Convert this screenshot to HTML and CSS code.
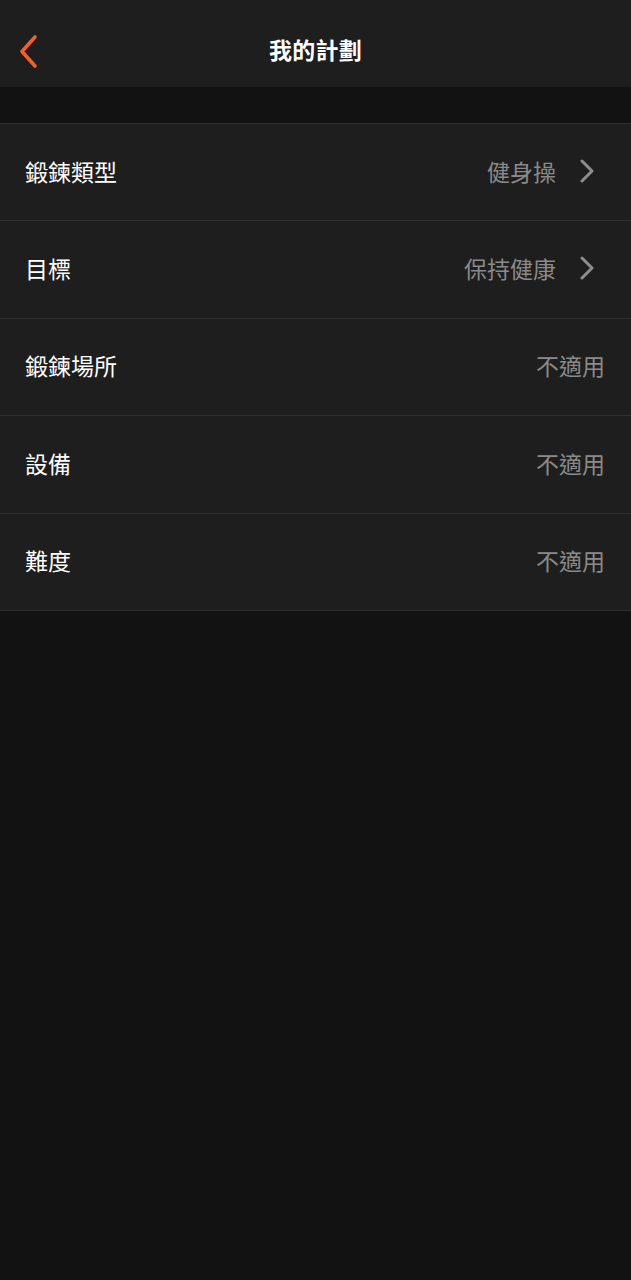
FILE: index.html
```html
<!DOCTYPE html>
<html lang="zh-Hant">
<head>
<meta charset="utf-8">
<title>我的計劃</title>
<link rel="stylesheet" href="styles.css">
</head>
<body>
<div class="app">
  <header class="topbar">
    <button class="back" aria-label="返回">
      <svg width="24" height="36" viewBox="0 0 24 36"><path d="M17 3 L4 17.5 L17 32" fill="none" stroke="#f2602d" stroke-width="3.6" stroke-linecap="round" stroke-linejoin="round"/></svg>
    </button>
    <h1 class="title">我的計劃</h1>
  </header>
  <div class="spacer"></div>
  <ul class="list">
    <li class="row"><span class="label">鍛鍊類型</span><span class="value">健身操</span><svg class="chev" width="16" height="24" viewBox="0 0 16 24"><path d="M3 2 L13 12 L3 22" fill="none" stroke="#8d8d8d" stroke-width="3" stroke-linecap="round" stroke-linejoin="round"/></svg></li>
    <li class="row"><span class="label">目標</span><span class="value">保持健康</span><svg class="chev" width="16" height="24" viewBox="0 0 16 24"><path d="M3 2 L13 12 L3 22" fill="none" stroke="#8d8d8d" stroke-width="3" stroke-linecap="round" stroke-linejoin="round"/></svg></li>
    <li class="row"><span class="label">鍛鍊場所</span><span class="value">不適用</span></li>
    <li class="row"><span class="label">設備</span><span class="value">不適用</span></li>
    <li class="row"><span class="label">難度</span><span class="value">不適用</span></li>
  </ul>
</div>
</body>
</html>
```

FILE: styles.css
```css
* { box-sizing: border-box; }
html, body {
  margin: 0;
  padding: 0;
  background: #121212;
  font-family: "Noto Sans CJK TC", "Noto Sans", sans-serif;
}
.app {
  width: 631px;
  min-height: 1280px;
  background: #121212;
}
.topbar {
  height: 87px;
  background: #1e1e1e;
  display: flex;
  align-items: center;
  justify-content: center;
  padding-top: 11px;
  position: relative;
}
.back {
  position: absolute;
  left: 18px;
  top: 34px;
  padding: 0;
  border: 0;
  background: none;
  width: 24px;
  height: 36px;
  display: flex;
}
.title {
  margin: 0;
  color: #ffffff;
  font-size: 23px;
  font-weight: 700;
  letter-spacing: 0.3px;
}
.spacer { height: 36px; }
.list {
  list-style: none;
  margin: 0;
  padding: 0;
  border-bottom: 1px solid #2f2f2f;
}
.row {
  height: 97.4px;
  border-top: 1px solid #2f2f2f;
  background: #1e1e1e;
  display: flex;
  align-items: center;
  padding: 0 26px 3px 25px;
}
.label {
  color: #ffffff;
  font-size: 23px;
  flex: 1;
}
.value {
  color: #8a8a8a;
  font-size: 23px;
}
.chev {
  margin-left: 23px;
  margin-right: 10px;
}
```
